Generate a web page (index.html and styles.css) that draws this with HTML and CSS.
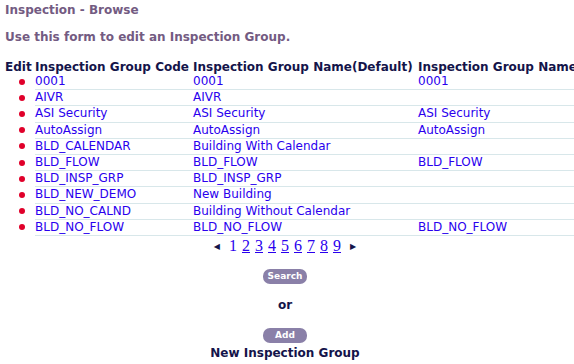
FILE: index.html
```html
<!DOCTYPE html>
<html>
<head>
<meta charset="utf-8">
<link rel="stylesheet" href="styles.css">
</head>
<body>
<div class="page">
  <h1 class="title">Inspection - Browse</h1>
  <p class="subtitle">Use this form to edit an Inspection Group.</p>
  <table class="grid">
    <thead>
      <tr>
        <th class="c-edit">Edit</th>
        <th class="c-code">Inspection Group Code</th>
        <th class="c-def">Inspection Group Name(Default)</th>
        <th class="c-name">Inspection Group Name</th>
      </tr>
    </thead>
    <tbody>
      <tr><td class="c-edit"><span class="dot"></span></td><td><a>0001</a></td><td><a>0001</a></td><td><a>0001</a></td></tr>
      <tr><td class="c-edit"><span class="dot"></span></td><td><a>AIVR</a></td><td><a>AIVR</a></td><td></td></tr>
      <tr><td class="c-edit"><span class="dot"></span></td><td><a>ASI Security</a></td><td><a>ASI Security</a></td><td><a>ASI Security</a></td></tr>
      <tr><td class="c-edit"><span class="dot"></span></td><td><a>AutoAssign</a></td><td><a>AutoAssign</a></td><td><a>AutoAssign</a></td></tr>
      <tr><td class="c-edit"><span class="dot"></span></td><td><a>BLD_CALENDAR</a></td><td><a>Building With Calendar</a></td><td></td></tr>
      <tr><td class="c-edit"><span class="dot"></span></td><td><a>BLD_FLOW</a></td><td><a>BLD_FLOW</a></td><td><a>BLD_FLOW</a></td></tr>
      <tr><td class="c-edit"><span class="dot"></span></td><td><a>BLD_INSP_GRP</a></td><td><a>BLD_INSP_GRP</a></td><td></td></tr>
      <tr><td class="c-edit"><span class="dot"></span></td><td><a>BLD_NEW_DEMO</a></td><td><a>New Building</a></td><td></td></tr>
      <tr><td class="c-edit"><span class="dot"></span></td><td><a>BLD_NO_CALND</a></td><td><a>Building Without Calendar</a></td><td></td></tr>
      <tr><td class="c-edit"><span class="dot"></span></td><td><a>BLD_NO_FLOW</a></td><td><a>BLD_NO_FLOW</a></td><td><a>BLD_NO_FLOW</a></td></tr>
    </tbody>
  </table>
  <div class="pager"><span class="arrow">&#9664;</span><span class="pg cur">1</span><a class="pg">2</a><a class="pg">3</a><a class="pg">4</a><a class="pg">5</a><a class="pg">6</a><a class="pg">7</a><a class="pg">8</a><a class="pg">9</a><span class="arrow">&#9654;</span></div>
  <div class="actions">
    <button class="btn">Search</button>
    <div class="or">or</div>
    <button class="btn">Add</button>
    <div class="newgrp">New Inspection Group</div>
  </div>
</div>
</body>
</html>
```

FILE: styles.css
```css
html, body {
  margin: 0;
  padding: 0;
  background: #ffffff;
  overflow: hidden;
}
body {
  font-family: "DejaVu Sans", Verdana, sans-serif;
  font-size: 12px;
}
.page {
  width: 620px;
  padding: 3px 0 0 5px;
}
.title {
  margin: 0;
  font-size: 12px;
  font-weight: bold;
  color: #735b82;
  line-height: 14px;
}
.subtitle {
  margin: 13px 0 0 0;
  font-size: 12px;
  font-weight: bold;
  color: #735b82;
  line-height: 14px;
}
.grid {
  margin-top: 16px;
  border-collapse: collapse;
  border-spacing: 0;
}
.grid th {
  text-align: left;
  color: #14144a;
  font-weight: bold;
  font-size: 12px;
  line-height: 14px;
  padding: 0 3px 0 0;
  white-space: nowrap;
}
.grid td {
  padding: 0 3px 0 0;
  line-height: 15.2px;
  border-bottom: 1px solid #d8e7ea;
  white-space: nowrap;
  color: #2a00ee;
}
.grid th.c-edit,
.grid td.c-edit {
  padding: 0;
  border-bottom: none;
}
.c-edit { width: 30px; }
.c-code { width: 155px; }
.c-def { width: 222px; }
.grid a {
  color: #2a00ee;
  text-decoration: none;
}
.dot {
  display: block;
  width: 6px;
  height: 6px;
  border-radius: 50%;
  background: #e0002a;
  margin-left: 14px;
}
.pager {
  width: 560px;
  display: flex;
  justify-content: center;
  align-items: baseline;
  gap: 5px;
  margin-top: 1px;
  font-family: "Liberation Serif", "Times New Roman", serif;
  font-size: 16px;
  line-height: 18px;
  color: #2a00ee;
}
.pager .pg {
  color: #2a00ee;
}
.pager a.pg {
  text-decoration: underline;
}
.pager .arrow {
  font-family: "DejaVu Sans", sans-serif;
  font-size: 8px;
  color: #14144a;
  position: relative;
  top: -2px;
  margin: 0 4px;
}
.actions {
  width: 560px;
  display: flex;
  flex-direction: column;
  align-items: center;
}
.btn {
  margin-top: 11px;
  width: 44px;
  height: 15px;
  padding: 0;
  border: none;
  border-radius: 7px;
  background: #8a80a8;
  color: #ffffff;
  font-family: "DejaVu Sans", Verdana, sans-serif;
  font-weight: bold;
  font-size: 9px;
  line-height: 15px;
}
.or {
  margin-top: 14px;
  font-weight: bold;
  color: #14144a;
  font-size: 12px;
  line-height: 14px;
}
.or + .btn {
  margin-top: 16px;
}
.newgrp {
  margin-top: 3px;
  font-weight: bold;
  color: #14144a;
  font-size: 12px;
  line-height: 14px;
}
```
